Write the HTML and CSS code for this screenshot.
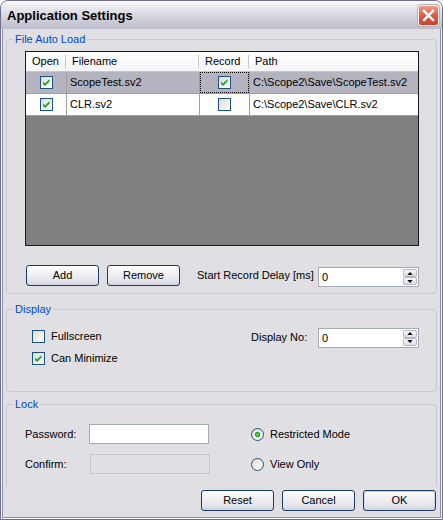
FILE: index.html
```html
<!DOCTYPE html>
<html lang="en">
<head>
<meta charset="utf-8">
<title>Application Settings</title>
<link rel="stylesheet" href="styles.css">
</head>
<body>
<div class="window">
  <header class="titlebar">
    <span class="title">Application Settings</span>
    <span class="close-btn">
      <svg width="19" height="19" viewBox="0 0 19 19"><path d="M5 5 L14 14 M14 5 L5 14" stroke="#fff" stroke-width="2.4" stroke-linecap="square"/></svg>
    </span>
  </header>
  <main class="client">
    <fieldset class="group">
      <legend>File Auto Load</legend>
      <div class="files-body">
        <div class="grid">
          <div class="grid-head">
            <div class="hcell">Open</div>
            <div class="hcell">Filename</div>
            <div class="hcell">Record</div>
            <div class="hcell last">Path</div>
          </div>
          <div class="grid-row selected">
            <div class="cell center"><span class="check"><svg width="11" height="11" viewBox="0 0 11 11"><polygon points="2,4.5 4,6.5 8.5,2 8.5,4.5 4,9 2,7" fill="#21a121"/></svg></span></div>
            <div class="cell">ScopeTest.sv2</div>
            <div class="cell center nopad"><div class="focus-box"><span class="check"><svg width="11" height="11" viewBox="0 0 11 11"><polygon points="2,4.5 4,6.5 8.5,2 8.5,4.5 4,9 2,7" fill="#21a121"/></svg></span></div></div>
            <div class="cell last">C:\Scope2\Save\ScopeTest.sv2</div>
          </div>
          <div class="grid-row">
            <div class="cell center"><span class="check"><svg width="11" height="11" viewBox="0 0 11 11"><polygon points="2,4.5 4,6.5 8.5,2 8.5,4.5 4,9 2,7" fill="#21a121"/></svg></span></div>
            <div class="cell">CLR.sv2</div>
            <div class="cell center"><span class="check"></span></div>
            <div class="cell last">C:\Scope2\Save\CLR.sv2</div>
          </div>
        </div>
        <div class="controls">
          <button class="btn">Add</button>
          <button class="btn">Remove</button>
          <span class="text delay-label">Start Record Delay [ms]</span>
          <div class="spin spin-right">
            <span class="spin-value">0</span>
            <span class="spin-buttons">
              <span class="spin-btn"><svg width="7" height="4" viewBox="0 0 7 4"><path d="M0 4 L3.5 0 L7 4Z" fill="#000"/></svg></span>
              <span class="spin-btn"><svg width="7" height="4" viewBox="0 0 7 4"><path d="M0 0 L3.5 4 L7 0Z" fill="#000"/></svg></span>
            </span>
          </div>
        </div>
      </div>
    </fieldset>

    <fieldset class="group group-display">
      <legend>Display</legend>
      <div class="display-body">
        <div class="check-list">
          <label class="check-row"><span class="check"></span>Fullscreen</label>
          <label class="check-row"><span class="check"><svg width="11" height="11" viewBox="0 0 11 11"><polygon points="2,4.5 4,6.5 8.5,2 8.5,4.5 4,9 2,7" fill="#21a121"/></svg></span>Can Minimize</label>
        </div>
        <div class="display-no">
          <span class="text">Display No:</span>
          <div class="spin">
            <span class="spin-value">0</span>
            <span class="spin-buttons">
              <span class="spin-btn"><svg width="7" height="4" viewBox="0 0 7 4"><path d="M0 4 L3.5 0 L7 4Z" fill="#000"/></svg></span>
              <span class="spin-btn"><svg width="7" height="4" viewBox="0 0 7 4"><path d="M0 0 L3.5 4 L7 0Z" fill="#000"/></svg></span>
            </span>
          </div>
        </div>
      </div>
    </fieldset>

    <fieldset class="group group-lock">
      <legend>Lock</legend>
      <div class="lock-body">
        <span class="text">Password:</span>
        <span class="textbox"></span>
        <label class="radio-row"><span class="radio checked"></span>Restricted Mode</label>
        <span class="text">Confirm:</span>
        <span class="textbox disabled"></span>
        <label class="radio-row"><span class="radio"></span>View Only</label>
      </div>
    </fieldset>

    <div class="footer">
      <button class="btn">Reset</button>
      <button class="btn">Cancel</button>
      <button class="btn default">OK</button>
    </div>
  </main>
</div>
</body>
</html>
```

FILE: styles.css
```css
* { box-sizing: border-box; }
html, body { margin: 0; padding: 0; background: #fff; }
body { font: 11px "Liberation Sans", Arial, sans-serif; color: #000; }

.window {
  width: 443px;
  height: 520px;
  border: 1px solid #6e6e8e;
  border-radius: 8px 8px 0 0;
  overflow: hidden;
  display: flex;
  flex-direction: column;
  background: #e0dfe3;
}

.titlebar {
  height: 28px;
  flex: none;
  display: flex;
  align-items: center;
  justify-content: space-between;
  padding: 0 3px 0 6px;
  background: linear-gradient(to bottom, #fdfdfe 0%, #ececf1 18%, #d9d9e2 50%, #c8c8d5 78%, #bdbdcc 100%);
}
.title { font-weight: bold; font-size: 13px; line-height: 16px; margin-top: 1px; }
.close-btn {
  width: 21px;
  height: 21px;
  border: 1px solid #f3efee;
  border-radius: 3px;
  background: linear-gradient(to bottom, #eaa08c 0%, #d8634c 45%, #c5432e 100%);
  display: flex;
  align-items: center;
  justify-content: center;
  box-shadow: 0 0 0 1px #b9b0b8;
}
.close-btn svg { display: block; }

.client {
  flex: 1;
  border: 1px solid #f7f7fa;
  border-top: 0;
  box-shadow: inset 1px 0 #8e8fab, inset -1px 0 #8e8fab, inset 0 -1px #8e8fab;
  padding: 4px 4px 0;
  display: flex;
  flex-direction: column;
}

.group {
  margin: 0;
  padding: 0;
  min-width: 0;
  border: 1px solid #c9c8d0;
  border-radius: 4px;
}
.group legend {
  margin-left: 6px;
  padding: 0 2px;
  color: #0046d5;
  font-size: 11px;
  line-height: 13px;
}
.group-display { margin-top: 9px; }
.group-lock { margin-top: 6px; border-bottom: 0; border-radius: 4px 4px 0 0; }

.files-body { padding: 5px 17px 6px 18px; }

.grid {
  height: 195px;
  border: 1px solid #1a1a1a;
  background: #808080;
}
.grid-head {
  display: grid;
  grid-template-columns: 40px 133px 50px 169px;
  height: 20px;
  border-bottom: 1px solid #c5c5cb;
  background: linear-gradient(to bottom, #ffffff, #f5f5f7);
}
.hcell {
  line-height: 19px;
  padding-left: 6px;
  white-space: nowrap;
  background: linear-gradient(#c6c6cc, #c6c6cc) no-repeat right 3px / 1px 13px;
}
.hcell.last { background: none; }

.grid-row {
  display: grid;
  grid-template-columns: 41px 133px 50px 168px;
  height: 22px;
  background: #fff;
}
.grid-row.selected { background: #b3b4bf; }
.cell {
  border-right: 1px solid #a0a0a0;
  border-bottom: 1px solid #a0a0a0;
  line-height: 21px;
  padding-left: 3px;
  white-space: nowrap;
  overflow: hidden;
}
.cell.last { border-right: 0; }
.cell.center { display: flex; align-items: center; justify-content: center; padding-left: 0; }
.cell.nopad { padding: 0; align-items: stretch; }
.focus-box {
  flex: 1;
  border: 1px dotted #000;
  display: flex;
  align-items: center;
  justify-content: center;
}

.check {
  width: 13px;
  height: 13px;
  flex: none;
  border: 1px solid #1c5180;
  background: linear-gradient(135deg, #dcdcd7 0%, #f4f4f2 70%, #fff 100%);
  display: inline-flex;
  align-items: center;
  justify-content: center;
}
.check svg { display: block; }

.controls {
  display: flex;
  align-items: flex-start;
  margin-top: 19px;
  padding-left: 1px;
}
.btn {
  width: 73px;
  height: 21px;
  padding: 0;
  border: 1px solid #1d3b66;
  border-radius: 3px;
  background: linear-gradient(to bottom, #ffffff 0%, #f3f3f6 35%, #e2e2ea 80%, #cfcfdc 100%);
  font: inherit;
  color: #000;
  line-height: 19px;
}
.btn.default { box-shadow: inset 0 0 0 1px #c8d3ee; }
.controls .btn + .btn { margin-left: 8px; }
.text { line-height: 21px; white-space: nowrap; }
.delay-label { margin-left: 17px; }

.spin {
  width: 101px;
  height: 20px;
  border: 1px solid #a5acb5;
  background: #fff;
  padding: 1px;
  display: flex;
  justify-content: space-between;
}
.spin-right { margin-left: auto; margin-top: 2px; }
.spin-value { padding-left: 2px; line-height: 16px; }
.spin-buttons { display: flex; flex-direction: column; width: 14px; }
.spin-btn {
  height: 8px;
  border: 1px solid #b6b8c8;
  border-radius: 2px;
  background: linear-gradient(to bottom, #f8f8fb, #dcdce6);
  display: flex;
  align-items: center;
  justify-content: center;
}
.spin-btn svg { display: block; width: 6px; height: 3px; }

.display-body {
  height: 75px;
  display: flex;
  justify-content: space-between;
  align-items: flex-start;
  padding: 11px 17px 0 25px;
}
.check-list {
  display: flex;
  flex-direction: column;
  gap: 9px;
  padding-top: 3px;
}
.check-row, .radio-row {
  display: flex;
  align-items: center;
  gap: 6px;
  height: 13px;
  line-height: 13px;
  white-space: nowrap;
}
.display-no {
  width: 168px;
  display: flex;
  align-items: center;
  justify-content: space-between;
}

.lock-body {
  height: 75px;
  display: grid;
  grid-template-columns: 64px 120px auto;
  grid-auto-rows: 20px;
  row-gap: 10px;
  align-items: center;
  padding: 13px 0 0 18px;
}
.textbox {
  height: 20px;
  border: 1px solid #a5acb5;
  background: #fff;
}
.textbox.disabled { background: #e0dfe3; border-color: #c6c5cc; margin-left: 1px; margin-right: -1px; }
.radio-row { padding-left: 42px; height: 20px; }
.radio {
  width: 13px;
  height: 13px;
  flex: none;
  border-radius: 50%;
  border: 1px solid #1c5180;
  background: linear-gradient(135deg, #dcdcd7 0%, #f4f4f2 70%, #fff 100%);
}
.radio.checked {
  background: radial-gradient(circle at 50% 50%, #8fe08f 0, #3cbc3c 1.3px, #21a121 2.4px, rgba(33,161,33,0) 3px),
              linear-gradient(135deg, #dcdcd7 0%, #f4f4f2 70%, #fff 100%);
}

.footer {
  display: flex;
  justify-content: flex-end;
  gap: 8px;
  margin-top: 4px;
  padding-right: 1px;
}
```
